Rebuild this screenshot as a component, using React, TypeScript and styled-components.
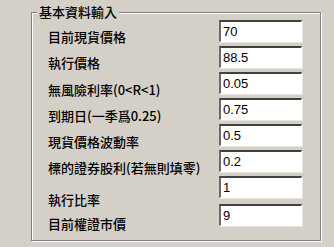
import React from "react";
import styled, { createGlobalStyle } from "styled-components";

const Global = createGlobalStyle`
  html, body { margin: 0; padding: 0; background: #d4d0c8; }
  body { font-family: "Noto Sans CJK TC", "Liberation Sans", sans-serif; }
`;

const Page = styled.div`
  width: 334px;
  height: 247px;
  padding: 12px 0 0 31px;
  box-sizing: border-box;
  background: #d4d0c8;
`;

const Group = styled.section`
  position: relative;
  width: 290px;
  height: 229px;
  box-sizing: border-box;
  border: 1px solid #808080;
  box-shadow: 1px 1px 0 #ffffff, inset 1px 1px 0 #ffffff;
  padding: 7px 0 0 16px;
`;

const Legend = styled.div`
  position: absolute;
  top: -9px;
  left: 5px;
  padding: 0 2px;
  background: #d4d0c8;
  font-size: 13px;
  font-weight: 500;
  line-height: 16px;
  color: #000;
`;

const Form = styled.div`
  display: grid;
  grid-template-columns: 171px 83px;
  grid-auto-rows: 22px;
  row-gap: 4px;
`;

const Label = styled.div<{ $drop: number }>`
  font-size: 13px;
  font-weight: 500;
  line-height: 16px;
  color: #000;
  padding-top: ${(p) => p.$drop}px;
  white-space: nowrap;
`;

const Field = styled.input<{ $gap?: number }>`
  box-sizing: border-box;
  width: 83px;
  height: 22px;
  margin: ${(p) => p.$gap ?? 0}px 0 0 0;
  padding: 0 0 0 2px;
  border-style: solid;
  border-width: 2px 1px 1px 2px;
  border-color: #404040 #ffffff #ffffff #6a6a6a;
  box-shadow: 1px 1px 0 #e8e6e0;
  background: #ffffff;
  font-family: "Liberation Sans", Arial, sans-serif;
  font-size: 13px;
  color: #000;
  outline: none;
`;

const rows: { label: string; value: string; drop: number; gap?: number }[] = [
  { label: "目前現貨價格", value: "70", drop: 9 },
  { label: "執行價格", value: "88.5", drop: 9 },
  { label: "無風險利率(0<R<1)", value: "0.05", drop: 10 },
  { label: "到期日(一季爲0.25)", value: "0.75", drop: 10 },
  { label: "現貨價格波動率", value: "0.5", drop: 10 },
  { label: "標的證券股利(若無則填零)", value: "0.2", drop: 10 },
  { label: "執行比率", value: "1", drop: 16 },
  { label: "目前權證市價", value: "9", drop: 14, gap: 2 },
];

export default function App() {
  return (
    <>
      <Global />
      <Page>
        <Group>
          <Legend>基本資料輸入</Legend>
          <Form>
            {rows.map((r) => (
              <React.Fragment key={r.label}>
                <Label $drop={r.drop}>{r.label}</Label>
                <Field $gap={r.gap} defaultValue={r.value} />
              </React.Fragment>
            ))}
          </Form>
        </Group>
      </Page>
    </>
  );
}
